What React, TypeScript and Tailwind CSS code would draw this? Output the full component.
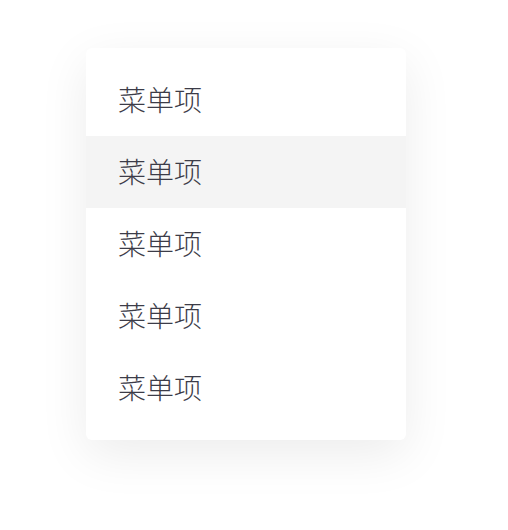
const items = ['菜单项', '菜单项', '菜单项', '菜单项', '菜单项'];

export default function App() {
  return (
    <div className="min-h-[530px] w-[508px] bg-white pl-[86px] pt-[48px]" style={{ fontFamily: '"Noto Sans CJK SC", "Noto Sans", sans-serif' }}>
      <ul className="w-[320px] rounded-[6px] bg-white py-4 shadow-[0_14px_50px_rgba(0,0,0,0.08)]">
        {items.map((label, i) => (
          <li
            key={i}
            className={`flex h-[72px] items-center pb-[3px] pl-[32px] text-[28px] font-light text-[#3c3c48] ${i === 1 ? 'bg-[#f4f4f4]' : ''}`}
          >
            {label}
          </li>
        ))}
      </ul>
    </div>
  );
}
